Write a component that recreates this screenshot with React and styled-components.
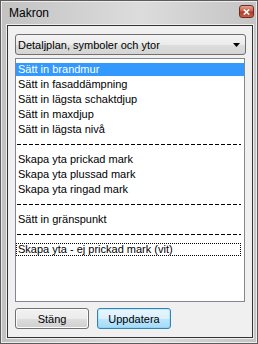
import React from "react";
import styled, { createGlobalStyle, css } from "styled-components";

const Global = createGlobalStyle`
  html, body { margin: 0; padding: 0; background: #c8c8c8; }
  body { font-family: "Liberation Sans", Arial, sans-serif; font-size: 11px; color: #000; }
  * { box-sizing: border-box; }
`;

const Window = styled.div`
  width: 258px;
  height: 344px;
  border: 1px solid #5c5c5c;
  box-shadow: inset 0 0 0 1px #ececec;
  background: linear-gradient(to right, #c2c2c2 0%, #d8d8d8 45%, #dcdcdc 55%, #c4c4c4 100%);
  display: flex;
  flex-direction: column;
  padding: 0 4px 5px 6px;
`;

const TitleBar = styled.div`
  height: 24px;
  display: flex;
  align-items: center;
  justify-content: space-between;
  padding: 0 1px 1px 2px;
`;

const Title = styled.span`
  font-size: 12px;
  color: #000;
  line-height: 14px;
`;

const CloseButton = styled.div`
  width: 15px;
  height: 13px;
  margin-right: -2px;
  margin-top: -2px;
  border: 1px solid #6d2b22;
  border-radius: 3px;
  background: linear-gradient(to bottom, #e6a294 0%, #cc5d4a 45%, #b23a28 55%, #c4604b 100%);
  display: flex;
  align-items: center;
  justify-content: center;
`;

const Client = styled.div`
  flex: 1;
  border: 1px solid #333;
  box-shadow: 0 0 0 1px #eeeeee;
  background: #f0f0f0;
  display: flex;
  flex-direction: column;
  padding: 8px 6px 8px 7px;
  min-height: 0;
`;

const Select = styled.div`
  height: 21px;
  border: 1px solid #707070;
  border-radius: 3px;
  background: linear-gradient(to bottom, #f4f4f4 0%, #ebebeb 50%, #dddddd 51%, #d4d4d4 100%);
  display: flex;
  align-items: center;
  justify-content: space-between;
  padding: 0 5px 0 2px;
  flex-shrink: 0;
`;

const SelectText = styled.span`
  line-height: 14px;
`;

const ListBox = styled.div`
  margin-top: 3px;
  margin-right: 1px;
  flex: 1;
  background: #fff;
  border: 1px solid #828790;
  padding: 3px 0 0 0;
  min-height: 0;
`;

const Row = styled.div`
  height: 15px;
  display: flex;
  align-items: center;
  line-height: 13px;
`;

const ItemLabel = styled.div`
  flex: 1;
  height: 13px;
  display: flex;
  align-items: center;
  padding-left: 2px;
  line-height: 13px;
  white-space: nowrap;
  ${(p) =>
    p.$selected &&
    css`
      background: #3399ff;
      color: #fff;
    `}
  ${(p) =>
    p.$focused &&
    css`
      outline: 1px dotted #000;
      outline-offset: -1px;
      margin-right: 3px;
    `}
`;

const Separator = styled.div`
  flex: 1;
  height: 1px;
  margin: 0 3px 0 1px;
  background: repeating-linear-gradient(to right, #000 0 4px, transparent 4px 6px);
`;

const ButtonRow = styled.div`
  display: flex;
  gap: 8px;
  margin-top: 6px;
  flex-shrink: 0;
`;

const Button = styled.div`
  width: 74px;
  height: 21px;
  border: 1px solid #707070;
  border-radius: 3px;
  display: flex;
  align-items: center;
  justify-content: center;
  line-height: 14px;
  background: linear-gradient(to bottom, #f2f2f2 0%, #ebebeb 50%, #dddddd 51%, #cfcfcf 100%);
  box-shadow: inset 0 0 0 1px #fcfcfc;
  ${(p) =>
    p.$default &&
    css`
      border-color: #3c7fb1;
      background: linear-gradient(to bottom, #eaf6fd 0%, #d9f0fc 50%, #bee6fd 51%, #a7d9f5 100%);
      box-shadow: inset 0 0 0 1px #48d6fb55;
    `}
`;

const items = [
  { t: "Sätt in brandmur", sel: true },
  { t: "Sätt in fasaddämpning" },
  { t: "Sätt in lägsta schaktdjup" },
  { t: "Sätt in maxdjup" },
  { t: "Sätt in lägsta nivå" },
  { sep: true },
  { t: "Skapa yta prickad mark" },
  { t: "Skapa yta plussad mark" },
  { t: "Skapa yta ringad mark" },
  { sep: true },
  { t: "Sätt in gränspunkt" },
  { sep: true },
  { t: "Skapa yta - ej prickad mark (vit)", focus: true },
];

export default function App() {
  return (
    <>
      <Global />
      <Window>
        <TitleBar>
          <Title>Makron</Title>
          <CloseButton>
            <svg width="7" height="6" viewBox="0 0 7 6">
              <path d="M0.8 0.5 L6.2 5.5 M6.2 0.5 L0.8 5.5" stroke="#fff" strokeWidth="1.6" />
            </svg>
          </CloseButton>
        </TitleBar>
        <Client>
          <Select>
            <SelectText>Detaljplan, symboler och ytor</SelectText>
            <svg width="7" height="4" viewBox="0 0 7 4">
              <path d="M0 0 H7 L3.5 4 Z" fill="#000" />
            </svg>
          </Select>
          <ListBox>
            {items.map((it, i) => (
              <Row key={i}>
                {it.sep ? (
                  <Separator />
                ) : (
                  <ItemLabel $selected={it.sel} $focused={it.focus}>
                    {it.t}
                  </ItemLabel>
                )}
              </Row>
            ))}
          </ListBox>
          <ButtonRow>
            <Button>Stäng</Button>
            <Button $default>Uppdatera</Button>
          </ButtonRow>
        </Client>
      </Window>
    </>
  );
}
